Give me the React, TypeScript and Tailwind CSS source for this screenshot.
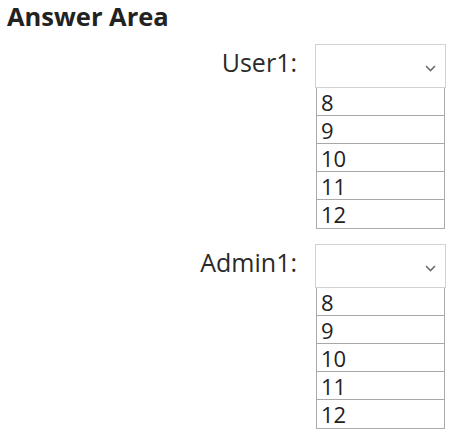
const options = ["8", "9", "10", "11", "12"]

function Chevron() {
  return (
    <svg width="11" height="7" viewBox="0 0 11 7" className="absolute right-[9px] top-[20px]">
      <polyline points="1,1 5.5,5.5 10,1" fill="none" stroke="#6b6b6b" strokeWidth="1.6" />
    </svg>
  )
}

function Dropdown({ label }: { label: string }) {
  return (
    <div className="flex items-start justify-end gap-[18px] pr-[8px]">
      <span className="text-[25px] leading-[36px] text-[#2a2a2a]">{label}</span>
      <div className="w-[131px] flex flex-col">
        <div className="relative h-[44px] border border-[#d2d2d2] bg-white">
          <Chevron />
        </div>
        <div className="border border-[#ababab] border-t-0 mx-[1px]">
          {options.map((o, i) => (
            <div
              key={o}
              className={
                "h-[28px] pl-[4px] text-[22px] leading-[28px] text-[#222] " +
                (i < options.length - 1 ? "border-b border-[#a8a8a8]" : "")
              }
            >
              {o}
            </div>
          ))}
        </div>
      </div>
    </div>
  )
}

export default function App() {
  return (
    <div className="w-[454px] h-[436px] bg-white overflow-hidden" style={{ fontFamily: '"Open Sans", sans-serif' }}>
      <h1 className="pl-[7px] pt-[1px] text-[25.5px] leading-[30px] font-bold text-[#222]">Answer Area</h1>
      <div className="mt-[13px] flex flex-col gap-[15px]">
        <Dropdown label="User1:" />
        <Dropdown label="Admin1:" />
      </div>
    </div>
  )
}
